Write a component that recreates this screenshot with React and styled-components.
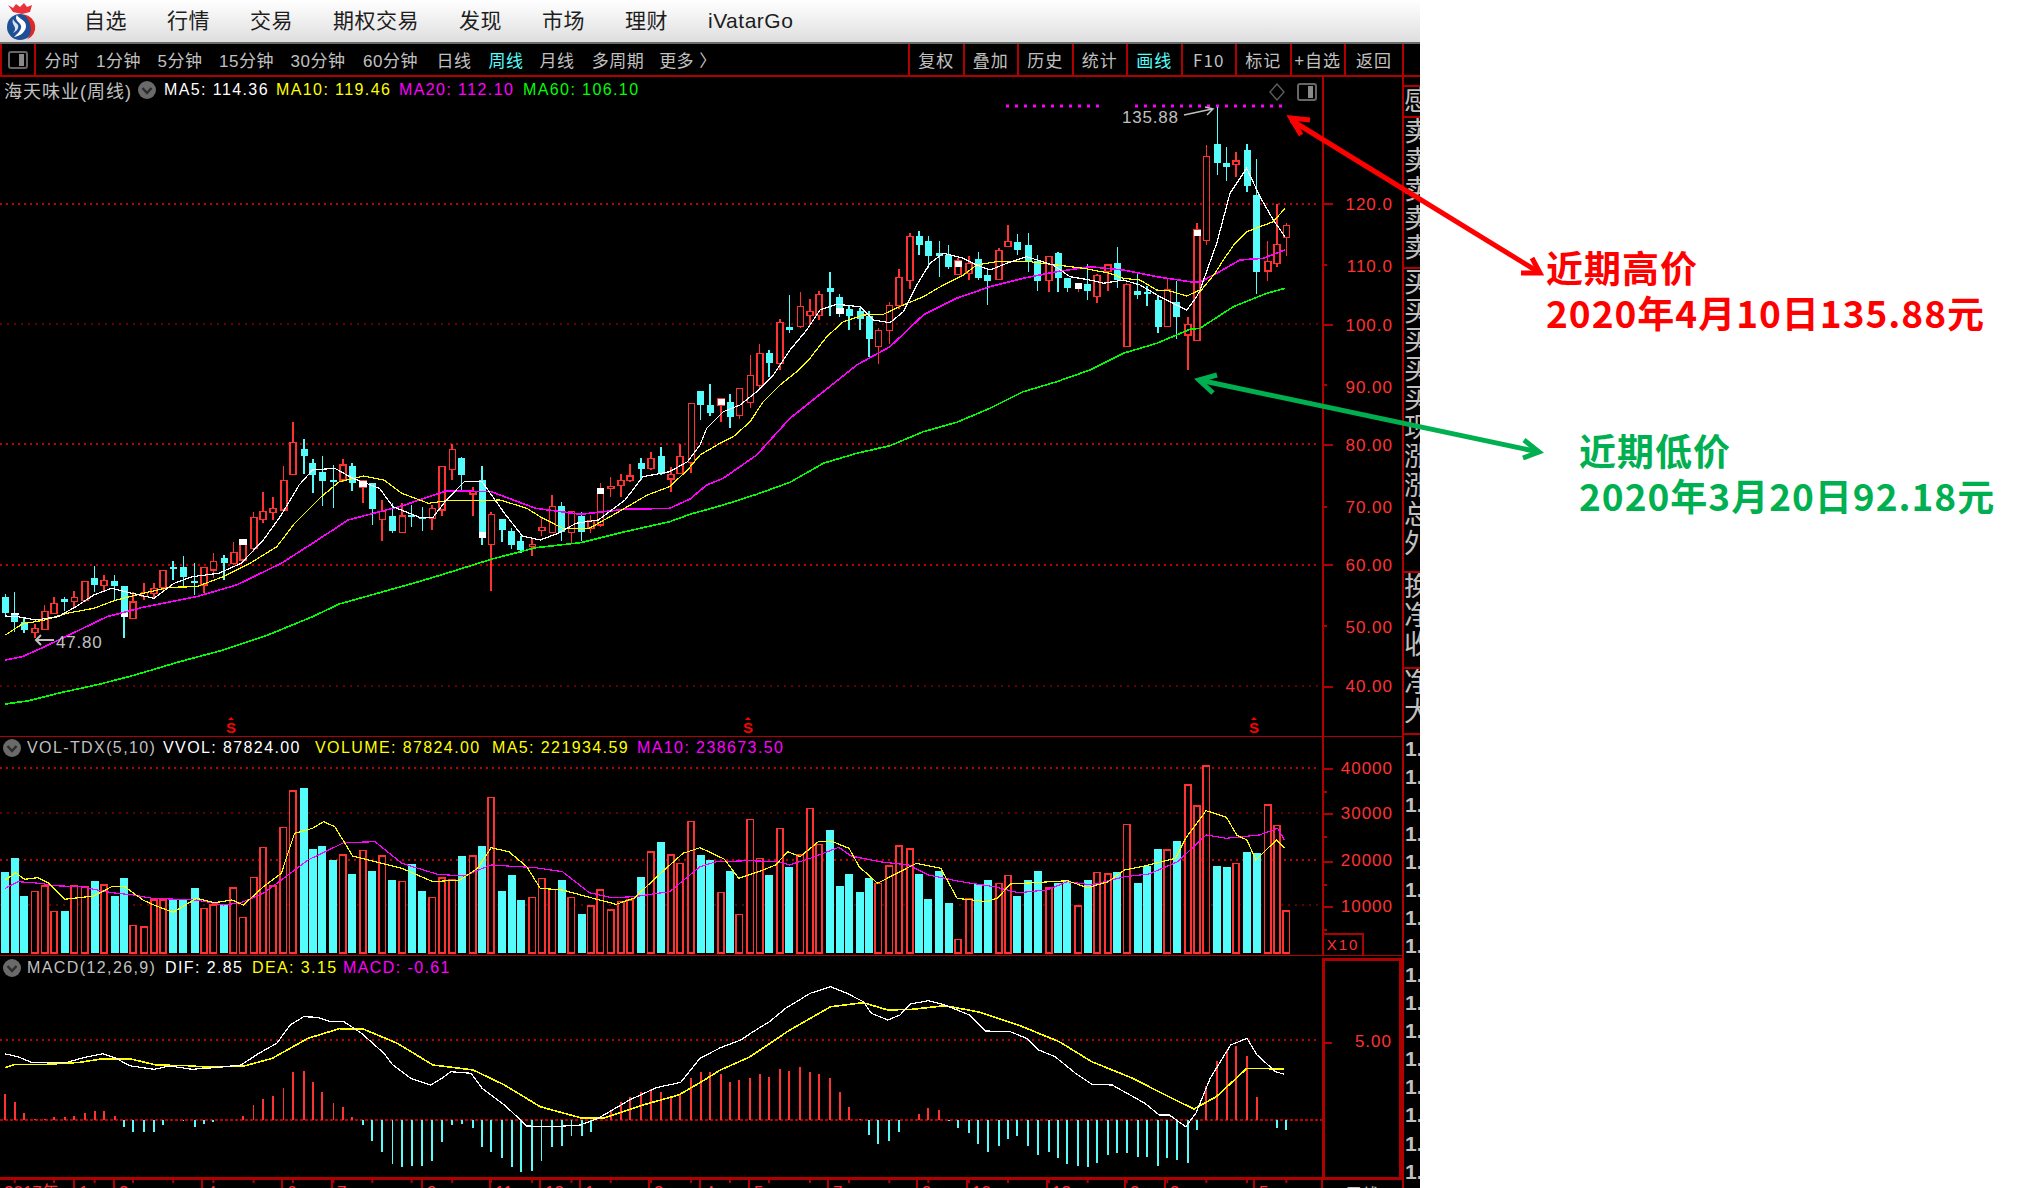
import React from 'react';
import styled, { createGlobalStyle } from 'styled-components';

const UI_FONT = '"Liberation Sans", "Noto Sans CJK SC", sans-serif';
const RED = '#ff3232';
const CYAN = '#54fcfc';
const LINE = '#b00000';
const GRID = '#c00000';
const GREY = '#c0c0c0';

// chart data, read off the screenshot at three crop scales and turned into page pixels below
const mapCandle = (x0, kx, y0, ky) => ([x, hi, top, bot, lo, t, wa, wb]) => ({
  x: x0 + x * kx,
  hi: y0 + hi * ky,
  top: y0 + top * ky,
  bot: y0 + bot * ky,
  lo: y0 + lo * ky,
  t,
  wa: wa === undefined ? null : y0 + wa * ky,
  wb: wb === undefined ? null : y0 + wb * ky,
});

const CANDLES = [
  ...[
    [12, 582, 592, 638, 650, 'c'], [33, 576, 640, 665, 695, 'c', 640, 646], [54, 650, 667, 690, 698, 'c'],
    [78, 672, 686, 697, 715, 'r'], [100, 615, 634, 688, 690, 'r'], [121, 590, 610, 640, 642, 'r'],
    [145, 590, 598, 606, 634, 'c'], [166, 573, 592, 605, 625, 'r'], [190, 542, 545, 602, 605, 'r'],
    [212, 498, 534, 554, 575, 'c'], [233, 525, 541, 557, 575, 'r'], [257, 525, 543, 558, 600, 'c'],
    [278, 558, 558, 650, 713, 'c', 640, 650], [298, 575, 606, 655, 655, 'r'], [323, 550, 578, 590, 600, 'r'],
    [345, 548, 565, 580, 598, 'r'], [365, 510, 512, 563, 570, 'r'], [388, 484, 502, 505, 540, 'c'],
    [411, 468, 502, 530, 560, 'c'], [436, 490, 544, 549, 585, 'c'], [457, 500, 502, 555, 580, 'r'],
    [478, 460, 485, 510, 535, 'r'], [502, 465, 474, 488, 540, 'c'], [523, 427, 457, 490, 495, 'r'],
    [544, 418, 418, 480, 482, 'r', 418, 434], [568, 335, 353, 445, 455, 'r'], [589, 275, 335, 358, 370, 'r'],
    [611, 292, 326, 337, 360, 'r'], [635, 198, 241, 330, 332, 'r'], [656, 67, 128, 223, 225, 'r'],
    [681, 117, 148, 167, 222, 'c'], [701, 178, 190, 225, 280, 'c'], [722, 168, 216, 243, 318, 'c'],
    [747, 195, 241, 243, 323, 'c'], [768, 178, 195, 240, 245, 'r'], [789, 188, 198, 248, 272, 'c'],
    [813, 240, 243, 262, 310, 'r', 243, 262], [834, 250, 250, 327, 374, 'c'], [856, 300, 335, 358, 423, 'r'],
    [879, 310, 348, 393, 400, 'c'], [901, 310, 348, 398, 400, 'r'], [922, 315, 345, 347, 380, 'c'],
    [946, 320, 350, 352, 393, 'c'], [968, 315, 325, 355, 390, 'r'], [990, 200, 200, 330, 348, 'r'],
    [1013, 133, 148, 208, 240, 'r'], [1034, 170, 175, 225, 275, 'c'], [1059, 262, 275, 282, 348, 'r'],
    [1080, 198, 240, 413, 435, 'c', 395, 413], [1100, 335, 343, 433, 573, 'r'], [1125, 358, 358, 390, 426, 'c'],
    [1146, 385, 393, 435, 447, 'c'], [1167, 407, 423, 450, 460, 'c'], [1192, 415, 433, 440, 468, 'r'],
    [1213, 350, 383, 392, 408, 'r'], [1237, 285, 320, 398, 400, 'r'], [1258, 307, 318, 395, 423, 'c'],
    [1280, 335, 335, 397, 428, 'r'], [1303, 335, 348, 395, 423, 'c'], [1323, 345, 362, 385, 398, 'r'],
    [1345, 250, 265, 375, 380, 'r', 265, 282], [1368, 232, 260, 262, 290, 'r'], [1391, 222, 242, 257, 290, 'r'],
    [1411, 193, 228, 242, 245, 'r'], [1436, 175, 190, 207, 240, 'c'], [1458, 155, 175, 205, 210, 'r'],
    [1481, 140, 168, 222, 225, 'c'], [1503, 200, 223, 237, 275, 'r'], [1523, 132, 170, 220, 222, 'r'],
    [1548, 10, 10, 188, 220, 'r'],
  ].map(mapCandle(0, 700 / 1568, 400, 1 / 3)),
  ...[
    [32, 528, 528, 570, 615, 'c'], [60, 507, 570, 595, 603, 'c'], [93, 552, 552, 570, 620, 'r', 552, 570],
    [120, 538, 562, 605, 638, 'c'], [148, 520, 520, 602, 612, 'r'], [181, 420, 482, 562, 578, 'r'],
    [209, 388, 415, 512, 518, 'r'], [237, 405, 415, 443, 486, 'c'], [270, 313, 322, 445, 465, 'r'],
    [298, 240, 337, 344, 353, 'c'], [331, 232, 275, 335, 338, 'r'], [360, 252, 290, 302, 330, 'r'],
    [387, 228, 238, 302, 315, 'r'], [420, 171, 220, 231, 302, 'c'], [449, 238, 246, 297, 305, 'c', 278, 297],
    [477, 272, 283, 303, 345, 'c'], [510, 280, 288, 312, 345, 'c'], [537, 288, 303, 372, 425, 'c'],
    [565, 340, 346, 394, 446, 'r'], [598, 262, 271, 346, 388, 'r'], [627, 162, 187, 272, 282, 'r'],
    [660, 55, 65, 197, 222, 'r'], [687, 48, 64, 90, 120, 'c'], [715, 64, 78, 122, 160, 'c'],
    [748, 78, 114, 122, 185, 'c'], [776, 90, 120, 155, 162, 'c'], [804, 130, 138, 179, 180, 'r', 138, 155],
    [837, 124, 145, 175, 195, 'r'], [865, 111, 132, 189, 195, 'c'], [893, 165, 180, 197, 270, 'c'],
    [927, 100, 106, 194, 196, 'r'], [954, 30, 79, 94, 95, 'r'], [982, 57, 82, 105, 120, 'c'],
    [1015, 55, 90, 138, 170, 'c'], [1043, 120, 138, 197, 228, 'c'], [1077, 122, 125, 197, 230, 'r'],
    [1104, 110, 114, 188, 230, 'c'], [1132, 190, 190, 218, 230, 'c'], [1165, 205, 205, 221, 230, 'r', 205, 221],
    [1193, 148, 207, 228, 255, 'c'], [1221, 178, 181, 244, 263, 'r'], [1254, 148, 150, 170, 228, 'r'],
    [1282, 97, 145, 195, 218, 'c'], [1310, 205, 208, 394, 396, 'r'], [1343, 177, 228, 240, 252, 'c'],
    [1371, 212, 232, 236, 272, 'c'], [1404, 240, 255, 335, 354, 'c'], [1432, 192, 225, 334, 336, 'r'],
    [1460, 197, 262, 305, 372, 'c'], [1494, 306, 328, 360, 465, 'r'], [1521, 25, 45, 376, 378, 'r', 45, 63],
  ].map(mapCandle(690, 1 / 3, 215, 1 / 3)),
  ...[
    [319, 225, 260, 512, 525, 'r'], [352, 112, 222, 278, 315, 'c'], [380, 230, 280, 290, 332, 'c'],
    [408, 245, 273, 283, 322, 'r'], [441, 222, 240, 347, 365, 'c'], [470, 267, 375, 605, 672, 'c'],
    [503, 513, 575, 603, 632, 'r'], [531, 403, 523, 580, 590, 'r'], [559, 458, 467, 502, 557, 'r'],
  ].map(mapCandle(1100, 1 / 3, 70, 1 / 3)),
];

const pts = (x0, kx, y0, list) => list.map(([x, y]) => `${(x0 + x * kx).toFixed(1)},${(y0 + y / 3).toFixed(1)}`).join(' ');
const A = [0, 700 / 1568, 400];
const B = [690, 1 / 3, 215];
const C = [1100, 1 / 3, 70];
const D = [0, 700 / 1568, 720];
const E = [700, 640 / 1568, 720];
const F = [0, 700 / 1568, 950];
const G = [700, 640 / 1568, 950];

const MA5 = [
  pts(...A, [[12, 648], [40, 650], [80, 660], [130, 650], [170, 620], [210, 585], [250, 565], [290, 578], [345, 595], [390, 550], [430, 530], [490, 520], [540, 490], [590, 420], [630, 345], [670, 255], [700, 210], [750, 205], [790, 235], [850, 265], [880, 320], [940, 352], [970, 352], [1000, 300], [1040, 245], [1080, 245], [1130, 340], [1170, 408], [1210, 420], [1250, 400], [1290, 370], [1340, 360], [1400, 300], [1440, 230], [1500, 215], [1540, 185], [1568, 135]]),
  pts(...B, [[50, 640], [100, 590], [150, 570], [200, 530], [250, 480], [300, 405], [350, 345], [390, 285], [440, 268], [510, 275], [550, 315], [600, 323], [640, 290], [680, 210], [720, 145], [760, 115], [820, 130], [860, 150], [900, 165], [950, 145], [1010, 125], [1090, 150], [1140, 185], [1200, 195], [1240, 205], [1300, 195], [1350, 210], [1410, 245], [1490, 285], [1520, 245]]),
  pts(...C, [[300, 660], [350, 520], [390, 370], [440, 295], [480, 380], [520, 450], [555, 500]]),
].join(' ');
const MA10 = [
  pts(...A, [[12, 705], [50, 672], [100, 660], [150, 640], [210, 625], [260, 600], [320, 580], [380, 562], [440, 560], [500, 530], [560, 490], [620, 440], [660, 370], [720, 290], [760, 245], [815, 228], [860, 240], [900, 280], [960, 310], [1000, 302], [1060, 302], [1120, 300], [1180, 325], [1210, 350], [1260, 385], [1320, 385], [1380, 340], [1450, 285], [1500, 260], [1540, 210]]),
  pts(...B, [[30, 720], [90, 685], [130, 665], [180, 620], [220, 560], [270, 510], [320, 470], [360, 430], [410, 365], [460, 320], [520, 300], [580, 298], [640, 270], [700, 245], [760, 210], [820, 180], [860, 150], [920, 140], [1020, 140], [1100, 150], [1180, 160], [1260, 175], [1300, 190], [1350, 195], [1400, 225], [1440, 228], [1490, 243], [1530, 225]]),
  pts(...C, [[300, 665], [345, 610], [370, 570], [405, 520], [440, 485], [520, 455], [555, 415]]),
].join(' ');
const MA20 = [
  pts(...A, [[12, 780], [50, 770], [100, 740], [170, 695], [240, 650], [320, 622], [440, 590], [530, 555], [630, 490], [700, 430], [780, 360], [850, 335], [900, 318], [1000, 272], [1100, 275], [1200, 325], [1300, 343], [1400, 328], [1500, 325]]),
  pts(...B, [[0, 852], [50, 810], [100, 790], [200, 720], [300, 610], [400, 530], [500, 450], [600, 395], [700, 300], [800, 250], [900, 215], [1000, 190], [1100, 170], [1200, 155], [1300, 165], [1400, 185], [1500, 200]]),
  pts(...C, [[300, 636], [350, 610], [420, 570], [490, 565], [555, 540]]),
].join(' ');
const MA60 = [
  pts(...A, [[12, 912], [65, 902], [130, 880], [225, 852], [300, 826], [400, 786], [500, 750], [600, 705], [700, 650], [760, 612], [850, 578], [930, 548], [1000, 520], [1100, 478], [1200, 443], [1300, 428], [1400, 395], [1500, 365]]),
  pts(...B, [[0, 898], [100, 870], [200, 838], [300, 802], [400, 745], [500, 715], [600, 692], [700, 650], [800, 622], [900, 580], [1000, 530], [1100, 500], [1200, 465], [1300, 415], [1400, 385], [1500, 343]]),
  pts(...C, [[300, 775], [400, 710], [500, 670], [555, 655]]),
].join(' ');

const VOL_A = [455, 413, 528, 514, 498, 574, 573, 496, 500, 483, 495, 528, 474, 616, 621, 540, 540, 540, 538, 504, 565, 555, 555, 504, 592, 472, 382, 498, 322, 213, 204, 387, 378, 420, 405, 462, 391, 453, 408, 480, 484, 432, 513, 532, 474, 480, 408, 408, 378, 232, 513, 465, 540, 532, 475, 508, 480, 532, 582, 558, 510, 570, 545, 540, 471, 396, 366, 405, 430, 304];
const VOL_B = [405, 420, 517, 453, 583, 298, 415, 465, 325, 441, 405, 265, 373, 330, 498, 462, 516, 474, 490, 438, 378, 387, 462, 537, 453, 549, 658, 537, 492, 480, 490, 466, 528, 480, 453, 504, 490, 484, 558, 480, 457, 462, 456, 313, 489, 438, 387, 390, 363, 195, 258, 138, 438, 441, 430, 396, 399, 255, 316, 573];
// indexes of the cyan bars, everything else hollow red
const VOL_CYAN = new Set([0, 1, 2, 6, 9, 11, 12, 17, 18, 19, 22, 30, 31, 32, 33, 35, 37, 39, 41, 42, 46, 48, 50, 51, 52, 56, 58, 64, 66, 70, 71, 73, 77, 79, 83, 84, 85, 86, 87, 92, 93, 94, 95, 98, 99, 102, 103, 104, 106, 107, 109, 112, 114, 115, 116, 118, 122, 123, 125, 126]);
const VOLUMES = [...VOL_A, ...VOL_B].map((y, i) => ({ x: CANDLES[i].x, top: 720 + y / 3, cyan: VOL_CYAN.has(i) }));

const VOL_MA5 = [
  pts(...D, [[12, 480], [35, 458], [55, 478], [85, 473], [110, 490], [145, 538], [210, 528], [250, 500], [280, 500], [320, 540], [350, 558], [388, 577], [440, 535], [480, 548], [520, 540], [545, 555], [590, 500], [630, 460], [660, 340], [700, 325], [725, 305], [750, 320], [790, 408], [840, 425], [900, 445], [970, 485], [1030, 480], [1070, 445], [1100, 383], [1140, 395], [1180, 440], [1210, 505], [1260, 510], [1320, 532], [1380, 553], [1420, 535], [1480, 460], [1530, 400]]),
  pts(...E, [[0, 383], [30, 400], [60, 418], [95, 475], [150, 452], [185, 435], [215, 395], [245, 410], [290, 365], [325, 365], [365, 385], [390, 440], [435, 490], [490, 455], [530, 430], [590, 445], [630, 535], [705, 545], [730, 533], [760, 492], [860, 485], [900, 482], [950, 503], [1000, 485], [1040, 450], [1100, 435], [1165, 415], [1190, 355], [1240, 272], [1290, 292], [1315, 345], [1340, 360], [1362, 420], [1412, 360], [1432, 385]]),
].join(' ');
const VOL_MA10 = [
  pts(...D, [[12, 505], [40, 485], [90, 490], [120, 497], [180, 500], [250, 518], [300, 525], [340, 535], [440, 540], [500, 555], [540, 548], [590, 520], [650, 460], [690, 420], [770, 368], [840, 365], [900, 430], [980, 463], [1040, 468], [1090, 440], [1100, 435], [1200, 443], [1260, 455], [1320, 518], [1370, 533], [1420, 530], [1500, 515]]),
  pts(...E, [[0, 440], [40, 425], [120, 422], [190, 425], [220, 435], [270, 415], [340, 382], [370, 408], [440, 425], [510, 435], [560, 465], [640, 485], [720, 500], [780, 518], [850, 510], [900, 485], [960, 495], [1040, 470], [1100, 462], [1170, 425], [1240, 345], [1290, 355], [1370, 345], [1415, 325], [1432, 360]]),
].join(' ');

const DIF = [
  pts(...F, [[12, 312], [40, 320], [70, 337], [110, 337], [150, 337], [190, 322], [230, 311], [260, 325], [290, 347], [345, 358], [380, 348], [430, 358], [480, 353], [540, 345], [580, 310], [620, 280], [650, 225], [680, 200], [710, 202], [740, 215], [770, 215], [810, 250], [860, 310], [880, 345], [920, 385], [965, 405], [990, 385], [1010, 365], [1055, 370], [1080, 415], [1130, 465], [1180, 528], [1240, 530], [1300, 525], [1340, 505], [1410, 450], [1470, 413], [1525, 397]]),
  pts(...G, [[0, 325], [50, 293], [100, 270], [130, 245], [170, 215], [210, 175], [270, 130], [320, 110], [360, 130], [400, 155], [420, 190], [460, 210], [490, 195], [515, 162], [560, 152], [600, 165], [660, 195], [700, 243], [760, 245], [800, 265], [830, 300], [870, 320], [920, 370], [960, 403], [1010, 405], [1090, 460], [1125, 495], [1150, 495], [1190, 530], [1215, 490], [1250, 385], [1300, 285], [1340, 265], [1365, 315], [1410, 365], [1432, 373]]),
].join(' ');
const DEA = [
  pts(...F, [[12, 353], [30, 344], [105, 343], [180, 337], [230, 326], [290, 326], [350, 345], [420, 347], [470, 352], [550, 347], [610, 325], [690, 265], [760, 236], [815, 238], [890, 280], [970, 345], [1060, 360], [1130, 405], [1210, 470], [1300, 503], [1355, 503], [1440, 465], [1520, 435]]),
  pts(...G, [[0, 398], [50, 360], [120, 322], [220, 240], [320, 170], [400, 158], [460, 180], [520, 178], [600, 167], [680, 185], [780, 225], [880, 275], [960, 335], [1060, 385], [1140, 435], [1210, 477], [1265, 440], [1340, 355], [1430, 357]]),
].join(' ');
const HIST_Y = [432, 457, 490, 507, 508, 502, 502, 498, 490, 483, 483, 498, 530, 545, 545, 545, 525, 510, 514, 530, 522, 516, 510, 510, 498, 465, 447, 438, 414, 366, 363, 396, 426, 459, 471, 501, 525, 573, 606, 642, 651, 648, 648, 633, 576, 525, 522, 534, 591, 606, 624, 651, 666, 663, 633, 591, 588, 558, 558, 546, 510, 480, 456, 441, 426, 417, 426, 441, 435, 384, 366, 366, 372, 396, 390, 384, 372, 381, 357, 363, 351, 366, 372, 384, 426, 471, 507, 555, 582, 573, 546, 510, 492, 474, 480, 513, 534, 549, 582, 606, 588, 567, 558, 588, 615, 606, 624, 642, 648, 651, 639, 615, 609, 609, 621, 621, 648, 624, 630, 639, 540, 408, 333, 300, 288, 318, 441, 510, 534, 540];

const SIGNALS = [231, 748, 1254];
const MONTHS = [
  [74, '1'], [114, '2'], [202, '4'], [282, '6'], [332, '7'], [422, '9'], [490, '11'], [540, '12'], [580, '1'], [649, '3'],
  [700, '4'], [749, '5'], [828, '7'], [917, '9'], [967, '10'], [1047, '12'], [1125, '2'], [1165, '3'], [1254, '5'],
];

const MENU = ['自选', '行情', '交易', '期权交易', '发现', '市场', '理财', 'iVatarGo'];
const PERIODS = [
  ['分时', 52], ['1分钟', 61], ['5分钟', 62], ['15分钟', 71], ['30分钟', 72], ['60分钟', 73],
  ['日线', 54], ['周线', 50], ['月线', 52], ['多周期', 70], ['更多 〉', 70],
];
const TOOLS = ['复权', '叠加', '历史', '统计', '画线', 'F10', '标记', '+自选'];
const SIDE_BLOCKS = [
  { h: 31, rows: ['感'] },
  { h: 151, rows: ['卖', '卖', '卖', '卖', '卖'] },
  { h: 304, rows: ['买', '买', '买', '买', '买', '现', '涨', '涨', '总', '外'] },
  { h: 96, rows: ['换', '净', '收'] },
  { h: 66, rows: ['净', '大'] },
];

const GlobalStyle = createGlobalStyle`
  html, body {
    margin: 0;
    background: #fff;
    overflow: hidden;
  }
  #root {
    width: 2027px;
    height: 1188px;
  }
`;

const Page = styled.div`
  position: relative;
  width: 2027px;
  height: 1188px;
  overflow: hidden;
  font-family: ${UI_FONT};
`;

const Terminal = styled.div`
  width: 1420px;
  height: 1188px;
  background: #000;
  display: flex;
  flex-direction: column;
  overflow: hidden;
`;

const TitleBar = styled.div`
  height: 42px;
  flex: none;
  display: flex;
  align-items: center;
  padding-left: 5px;
  background: linear-gradient(#fff, #f4f4f4 35%, #dedede);
  border-bottom: 2px solid #6a6a6a;
`;

const Menu = styled.nav`
  display: flex;
  align-items: baseline;
  gap: 40px;
  margin: -4px 0 0 47px;
`;

const MenuItem = styled.span`
  font-size: 21px;
  letter-spacing: 0.5px;
  color: #1d1d1d;
`;

const Toolbar = styled.div`
  height: 33px;
  flex: none;
  box-sizing: border-box;
  display: flex;
  align-items: stretch;
  border-bottom: 2px solid ${LINE};
`;

const ToggleCell = styled.div`
  width: 36px;
  box-sizing: border-box;
  flex: none;
  display: flex;
  align-items: center;
  justify-content: center;
  border-left: 2px solid ${LINE};
  border-right: 2px solid ${LINE};
`;

const Periods = styled.div`
  display: flex;
  flex: 1;
  align-items: center;
`;

const Period = styled.span`
  width: ${(p) => p.$w}px;
  flex: none;
  text-align: center;
  white-space: nowrap;
  font-size: 17px;
  letter-spacing: 0.5px;
  color: ${(p) => (p.$active ? CYAN : GREY)};
`;

const Tool = styled.span`
  width: ${(p) => p.$w}px;
  box-sizing: border-box;
  flex: none;
  display: flex;
  align-items: center;
  justify-content: center;
  white-space: nowrap;
  font-family: "Noto Sans CJK SC", "Liberation Sans", sans-serif;
  font-size: 17px;
  letter-spacing: 1px;
  border-left: 2px solid ${LINE};
  color: ${(p) => (p.$active ? CYAN : GREY)};
`;

const ToolbarEnd = styled.div`
  width: 18px;
  flex: none;
  box-sizing: border-box;
  border-left: 2px solid ${LINE};
`;

const Workspace = styled.div`
  flex: 1;
  min-height: 0;
  display: flex;
`;

const Charts = styled.div`
  width: 1402px;
  flex: none;
  display: flex;
  flex-direction: column;
`;

const Pane = styled.div`
  height: ${(p) => p.$h}px;
  flex: none;
  display: flex;
  box-sizing: border-box;
  border-bottom: ${(p) => (p.$flat ? 'none' : `1px solid ${LINE}`)};
`;

const Plot = styled.div`
  position: relative;
  width: 1322px;
  flex: none;
`;

const Axis = styled.div`
  position: relative;
  width: 80px;
  flex: none;
  box-sizing: border-box;
  border-left: 2px solid ${LINE};
`;

const BoxedAxis = styled.div`
  width: 80px;
  flex: none;
  box-sizing: border-box;
  margin-top: 2px;
  border: 3px solid ${LINE};
  border-bottom: none;
`;

const ChartSvg = styled.svg`
  display: block;
`;

const DateSvg = styled.svg`
  display: block;
  border-top: 3px solid ${LINE};
`;

const Legend = styled.div`
  position: absolute;
  left: 0;
  top: ${(p) => p.$top}px;
  height: 22px;
  display: flex;
  align-items: center;
`;

const LegendItem = styled.span`
  width: ${(p) => p.$w}px;
  flex: none;
  white-space: nowrap;
  font-size: 16px;
  letter-spacing: 1.4px;
  color: ${(p) => p.$color};
`;

const LegendTitle = styled.span`
  width: 137px;
  box-sizing: border-box;
  flex: none;
  padding-left: 4px;
  white-space: nowrap;
  font-size: 18px;
  letter-spacing: 1px;
  color: ${GREY};
`;

const LegendIcon = styled.span`
  width: ${(p) => p.$w}px;
  height: 20px;
  box-sizing: border-box;
  flex: none;
  padding-left: ${(p) => p.$pad}px;
`;

const CornerIcons = styled.div`
  position: absolute;
  right: 5px;
  top: 6px;
  display: flex;
  align-items: center;
  gap: 12px;
`;

const X10 = styled.div`
  position: absolute;
  left: 0;
  bottom: 0;
  width: 40px;
  height: 22px;
  box-sizing: border-box;
  border: 2px solid ${LINE};
  border-left: none;
  border-bottom: none;
  color: ${RED};
  font-size: 15px;
  letter-spacing: 2px;
  text-align: center;
  line-height: 20px;
`;

const SidePanel = styled.div`
  width: 18px;
  flex: none;
  box-sizing: border-box;
  border-left: 2px solid ${LINE};
  padding-top: 8px;
  overflow: hidden;
  display: flex;
  flex-direction: column;
`;

const SideBlock = styled.div`
  height: ${(p) => p.$h}px;
  flex: none;
  box-sizing: border-box;
  overflow: hidden;
  border-top: 2px solid ${LINE};
`;

const SideRow = styled.div`
  height: 29px;
  font-size: 27px;
  line-height: 29px;
  color: ${GREY};
  white-space: nowrap;
`;

const SideNumbers = styled.div`
  flex: 1;
  overflow: hidden;
  border-top: 2px solid ${LINE};
`;

const SideNumber = styled.div`
  height: 28.2px;
  padding-left: 1px;
  font-size: 21px;
  font-weight: 700;
  line-height: 28px;
  color: ${GREY};
`;

const AxisText = styled.text`
  font-family: ${UI_FONT};
  font-size: 17px;
  letter-spacing: 1px;
  fill: ${RED};
  text-anchor: end;
`;

const ChartText = styled.text`
  font-family: ${UI_FONT};
  font-size: 17px;
  letter-spacing: 0.8px;
  fill: ${GREY};
`;

const SignalText = styled.text`
  font-family: ${UI_FONT};
  font-size: 15px;
  font-weight: 700;
  fill: #ff0000;
  text-anchor: middle;
`;

const DateText = styled.text`
  font-family: ${UI_FONT};
  font-size: 17px;
  fill: ${(p) => (p.$grey ? GREY : RED)};
`;

const Annotations = styled.svg`
  position: absolute;
  left: 0;
  top: 0;
  pointer-events: none;
`;

const Note = styled.div`
  position: absolute;
  left: ${(p) => p.$left}px;
  top: ${(p) => p.$top}px;
  color: ${(p) => p.$color};
  font-family: "Noto Sans CJK SC", "Liberation Sans", sans-serif;
  font-size: 37px;
  font-weight: 700;
  line-height: 45px;
  letter-spacing: 1px;
  white-space: nowrap;
`;

const Logo = () => (
  <svg width="32" height="38" viewBox="0 0 32 38">
    <path d="M3 3l5 3 3-4 4 3 4-4 3 4 5-2-2 7-8 2-9-2z" fill="#e8323c" />
    <circle cx="15" cy="25" r="13" fill="#1f4f94" />
    <path d="M19 12.5a13 13 0 0 1 3 25c6-7 5-17-3-25z" fill="#e02828" />
    <path d="M12 13c-4 6 6 8 4 13-1 4-5 7-7 9 6-1 12-5 12-11 0-6-7-7-9-11z" fill="#fff" />
    <path d="M8 17c-2 5 3 7 2 11l-2 3c4-2 6-5 5-8-1-2-4-3-5-6z" fill="#d8e4f2" />
  </svg>
);

const ToggleIcon = () => (
  <svg width="20" height="18" viewBox="0 0 20 18">
    <rect x="1" y="1" width="18" height="16" rx="2" fill="none" stroke="#666" strokeWidth="2" />
    <rect x="11" y="3" width="5" height="12" fill="#8a8a8a" />
  </svg>
);

const ChevronDot = () => (
  <svg width="20" height="20" viewBox="0 0 20 20">
    <circle cx="10" cy="10" r="9" fill="#6a6a6a" />
    <path d="M5.5 8l4.5 5 4.5-5" fill="none" stroke="#2c2c2c" strokeWidth="2.4" />
  </svg>
);

const Candle = ({ c }) => {
  const color = c.t === 'c' ? CYAN : RED;
  const w = c.t === 'c' ? 7 : 6;
  const left = c.x - 3.5;
  const h = Math.max(c.bot - c.top, 2);
  return (
    <g shapeRendering="crispEdges">
      <line x1={c.x} x2={c.x} y1={c.hi} y2={c.lo} stroke={color} strokeWidth="1.5" />
      {c.t === 'c' ? (
        <rect x={left} y={c.top} width={w} height={h} fill={color} />
      ) : (
        <rect x={left + 0.75} y={c.top} width={w} height={h} fill="#000" stroke={color} strokeWidth="1.6" />
      )}
      {c.wa !== null && <rect x={left} y={c.wa} width="7.5" height={c.wb - c.wa} fill="#fff" />}
    </g>
  );
};

const Curve = ({ points, color, width = 1.2 }) => (
  <polyline points={points} fill="none" stroke={color} strokeWidth={width} shapeRendering="crispEdges" />
);

const GridLine = ({ y, strong }) => (
  <line x1="0" x2="1320" y1={y} y2={y} stroke={GRID} strokeWidth={strong ? 2 : 1} strokeDasharray={strong ? '2 4' : '2 5'} />
);

const Tick = ({ y, long }) => (
  <line x1="1323" x2={long ? 1333 : 1327} y1={y} y2={y} stroke={LINE} strokeWidth="2" />
);

const PRICE_LABELS = [
  [204, 204, '120.0'], [265, 266, '110.0'], [325, 325, '100.0'], [385, 387, '90.00'], [445, 445, '80.00'],
  [507, 507, '70.00'], [565, 565, '60.00'], [626, 627, '50.00'], [687, 686, '40.00'],
];
const VOL_LABELS = [[769, 768, '40000'], [814, 813, '30000'], [862, 860, '20000'], [907, 906, '10000']];

const MainPane = () => (
  <Pane $h={660}>
    <Plot>
      <ChartSvg width="1322" height="659" viewBox="0 77 1322 659">
        <GridLine y={204} strong />
        <GridLine y={324} />
        <GridLine y={444} strong />
        <GridLine y={565} strong />
        <GridLine y={686} />
        <line x1="1006" x2="1100" y1="106" y2="106" stroke="#ff00ff" strokeWidth="3" strokeDasharray="3 6" />
        <line x1="1135" x2="1288" y1="106" y2="106" stroke="#ff00ff" strokeWidth="3" strokeDasharray="3 6" />
        {CANDLES.map((c) => <Candle key={c.x} c={c} />)}
        <Curve points={MA60} color="#00ff00" width={1.6} />
        <Curve points={MA20} color="#ff00ff" width={1.6} />
        <Curve points={MA10} color="#ffff00" />
        <Curve points={MA5} color="#fff" />
        <ChartText x="1122" y="123">135.88</ChartText>
        <path d="M1184 115l28-6m-7-2l8 2-6 6" fill="none" stroke={GREY} strokeWidth="1.5" />
        <ChartText x="56" y="648">47.80</ChartText>
        <path d="M54 640H36m5-5l-5 5 5 5" fill="none" stroke={GREY} strokeWidth="2" />
        {SIGNALS.map((x) => (
          <g key={x}>
            <path d={`M${x - 3} 720l3-3 3 3z`} fill="#ff0000" />
            <SignalText x={x} y="733">S</SignalText>
          </g>
        ))}
      </ChartSvg>
      <Legend $top={2}>
        <LegendTitle>海天味业(周线)</LegendTitle>
        <LegendIcon $w={27} $pad={0}><ChevronDot /></LegendIcon>
        <LegendItem $w={112} $color="#fff">MA5: 114.36</LegendItem>
        <LegendItem $w={123} $color="#ffff00">MA10: 119.46</LegendItem>
        <LegendItem $w={124} $color="#ff00ff">MA20: 112.10</LegendItem>
        <LegendItem $w={120} $color="#00ff00">MA60: 106.10</LegendItem>
      </Legend>
      <CornerIcons>
        <svg width="16" height="18" viewBox="0 0 16 18">
          <path d="M8 1l7 8-7 8-7-8z" fill="none" stroke="#5c5c5c" strokeWidth="1.4" />
        </svg>
        <ToggleIcon />
      </CornerIcons>
    </Plot>
    <Axis>
      <ChartSvg width="78" height="659" viewBox="1324 77 78 659">
        {PRICE_LABELS.map(([y, textY, label], i) => (
          <g key={label}>
            <Tick y={y} long={i % 2 === 0} />
            <AxisText x="1393" y={textY + 6}>{label}</AxisText>
          </g>
        ))}
      </ChartSvg>
    </Axis>
  </Pane>
);

const VolumePane = () => (
  <Pane $h={219}>
    <Plot>
      <ChartSvg width="1322" height="218" viewBox="0 737 1322 218">
        <GridLine y={768} strong />
        <GridLine y={813} />
        <GridLine y={860} strong />
        <GridLine y={905} />
        {VOLUMES.map((v) => (v.cyan ? (
          <rect key={v.x} x={v.x - 4} y={v.top} width="8" height={953 - v.top} fill={CYAN} shapeRendering="crispEdges" />
        ) : (
          <rect key={v.x} x={v.x - 3.2} y={v.top} width="6.4" height={953 - v.top} fill="#000" stroke={RED} strokeWidth="1.6" shapeRendering="crispEdges" />
        )))}
        <Curve points={VOL_MA10} color="#ff00ff" />
        <Curve points={VOL_MA5} color="#ffff00" />
      </ChartSvg>
      <Legend $top={0}>
        <LegendIcon $w={27} $pad={2}><ChevronDot /></LegendIcon>
        <LegendItem $w={136} $color={GREY}>VOL-TDX(5,10)</LegendItem>
        <LegendItem $w={152} $color="#fff">VVOL: 87824.00</LegendItem>
        <LegendItem $w={177} $color="#ffff00">VOLUME: 87824.00</LegendItem>
        <LegendItem $w={145} $color="#ffff00">MA5: 221934.59</LegendItem>
        <LegendItem $w={160} $color="#ff00ff">MA10: 238673.50</LegendItem>
      </Legend>
    </Plot>
    <Axis>
      <ChartSvg width="78" height="218" viewBox="1324 737 78 218">
        {VOL_LABELS.map(([y, textY, label]) => (
          <g key={label}>
            <Tick y={y} long />
            <Tick y={y + 23} />
            <AxisText x="1393" y={textY + 6}>{label}</AxisText>
          </g>
        ))}
      </ChartSvg>
      <X10>X10</X10>
    </Axis>
  </Pane>
);

const MacdPane = () => (
  <Pane $h={221} $flat>
    <Plot>
      <ChartSvg width="1322" height="221" viewBox="0 956 1322 221">
        <GridLine y={1040} strong />
        <line x1="0" x2="1322" y1="1120" y2="1120" stroke={GRID} strokeWidth="2" strokeDasharray="3 2" />
        {HIST_Y.map((y, i) => {
          const end = 950 + y / 3;
          return (
            <line
              key={i}
              x1={CANDLES[i].x}
              x2={CANDLES[i].x}
              y1={1120}
              y2={end}
              stroke={end < 1120 ? RED : CYAN}
              strokeWidth="1.8"
              shapeRendering="crispEdges"
            />
          );
        })}
        <Curve points={DEA} color="#ffff00" width={1.6} />
        <Curve points={DIF} color="#fff" />
      </ChartSvg>
      <Legend $top={1}>
        <LegendIcon $w={27} $pad={2}><ChevronDot /></LegendIcon>
        <LegendItem $w={138} $color={GREY}>MACD(12,26,9)</LegendItem>
        <LegendItem $w={87} $color="#fff">DIF: 2.85</LegendItem>
        <LegendItem $w={91} $color="#ffff00">DEA: 3.15</LegendItem>
        <LegendItem $w={110} $color="#ff00ff">MACD: -0.61</LegendItem>
      </Legend>
    </Plot>
    <BoxedAxis>
      <ChartSvg width="74" height="218" viewBox="1326 958 74 218">
        <line x1="1326" x2="1333" y1="1040" y2="1040" stroke={LINE} strokeWidth="2" />
        <AxisText x="1393" y="1044">5.00</AxisText>
      </ChartSvg>
    </BoxedAxis>
  </Pane>
);

const DateStrip = () => (
  <Pane $h={11} $flat>
    <DateSvg width="1402" height="11" viewBox="0 1177 1402 11">
      <DateText x="4" y="1195">2017年</DateText>
      {MONTHS.map(([x, label]) => (
        <g key={x}>
          <line x1={x} x2={x} y1="1177" y2="1188" stroke={LINE} strokeWidth="2" />
          <DateText x={x + 5} y="1195">{label}</DateText>
        </g>
      ))}
      {CANDLES.filter((c, i) => i % 4 === 1).map((c) => (
        <line key={c.x} x1={c.x} x2={c.x} y1="1177" y2="1180" stroke={LINE} strokeWidth="2" />
      ))}
      <line x1="1322" x2="1322" y1="1177" y2="1188" stroke={LINE} strokeWidth="2" />
      <DateText x="1345" y="1198" $grey>周线</DateText>
    </DateSvg>
  </Pane>
);

const Side = () => (
  <SidePanel>
    {SIDE_BLOCKS.map((block, i) => (
      <SideBlock key={i} $h={block.h}>
        {block.rows.map((row, j) => <SideRow key={j}>{row}</SideRow>)}
      </SideBlock>
    ))}
    <SideNumbers>
      {Array.from({ length: 16 }, (_, i) => <SideNumber key={i}>1.</SideNumber>)}
    </SideNumbers>
  </SidePanel>
);

export default function App() {
  return (
    <Page>
      <GlobalStyle />
      <Terminal>
        <TitleBar>
          <Logo />
          <Menu>
            {MENU.map((m) => <MenuItem key={m}>{m}</MenuItem>)}
          </Menu>
        </TitleBar>
        <Toolbar>
          <ToggleCell><ToggleIcon /></ToggleCell>
          <Periods>
            {PERIODS.map(([label, w]) => (
              <Period key={label} $w={w} $active={label === '周线'}>{label}</Period>
            ))}
          </Periods>
          {TOOLS.map((t) => <Tool key={t} $w={54.5} $active={t === '画线'}>{t}</Tool>)}
          <Tool $w={58}>返回</Tool>
          <ToolbarEnd />
        </Toolbar>
        <Workspace>
          <Charts>
            <MainPane />
            <VolumePane />
            <MacdPane />
            <DateStrip />
          </Charts>
          <Side />
        </Workspace>
      </Terminal>

      <Annotations width="2027" height="1188" viewBox="0 0 2027 1188">
        <g fill="none" stroke="#ff0000" strokeWidth="5">
          <path d="M1291 120L1540 273" />
          <path d="M1310 120L1291 118L1301 135" />
          <path d="M1521 273L1540 273L1532 258" />
        </g>
        <g fill="none" stroke="#00b050" strokeWidth="5">
          <path d="M1199 380L1539 452" />
          <path d="M1217 375L1199 380L1213 393" />
          <path d="M1524 440L1539 452L1523 458" />
        </g>
      </Annotations>
      <Note $left={1546} $top={245} $color="#ff0000">
        近期高价<br />2020年4月10日135.88元
      </Note>
      <Note $left={1579} $top={428} $color="#00b050">
        近期低价<br />2020年3月20日92.18元
      </Note>
    </Page>
  );
}
